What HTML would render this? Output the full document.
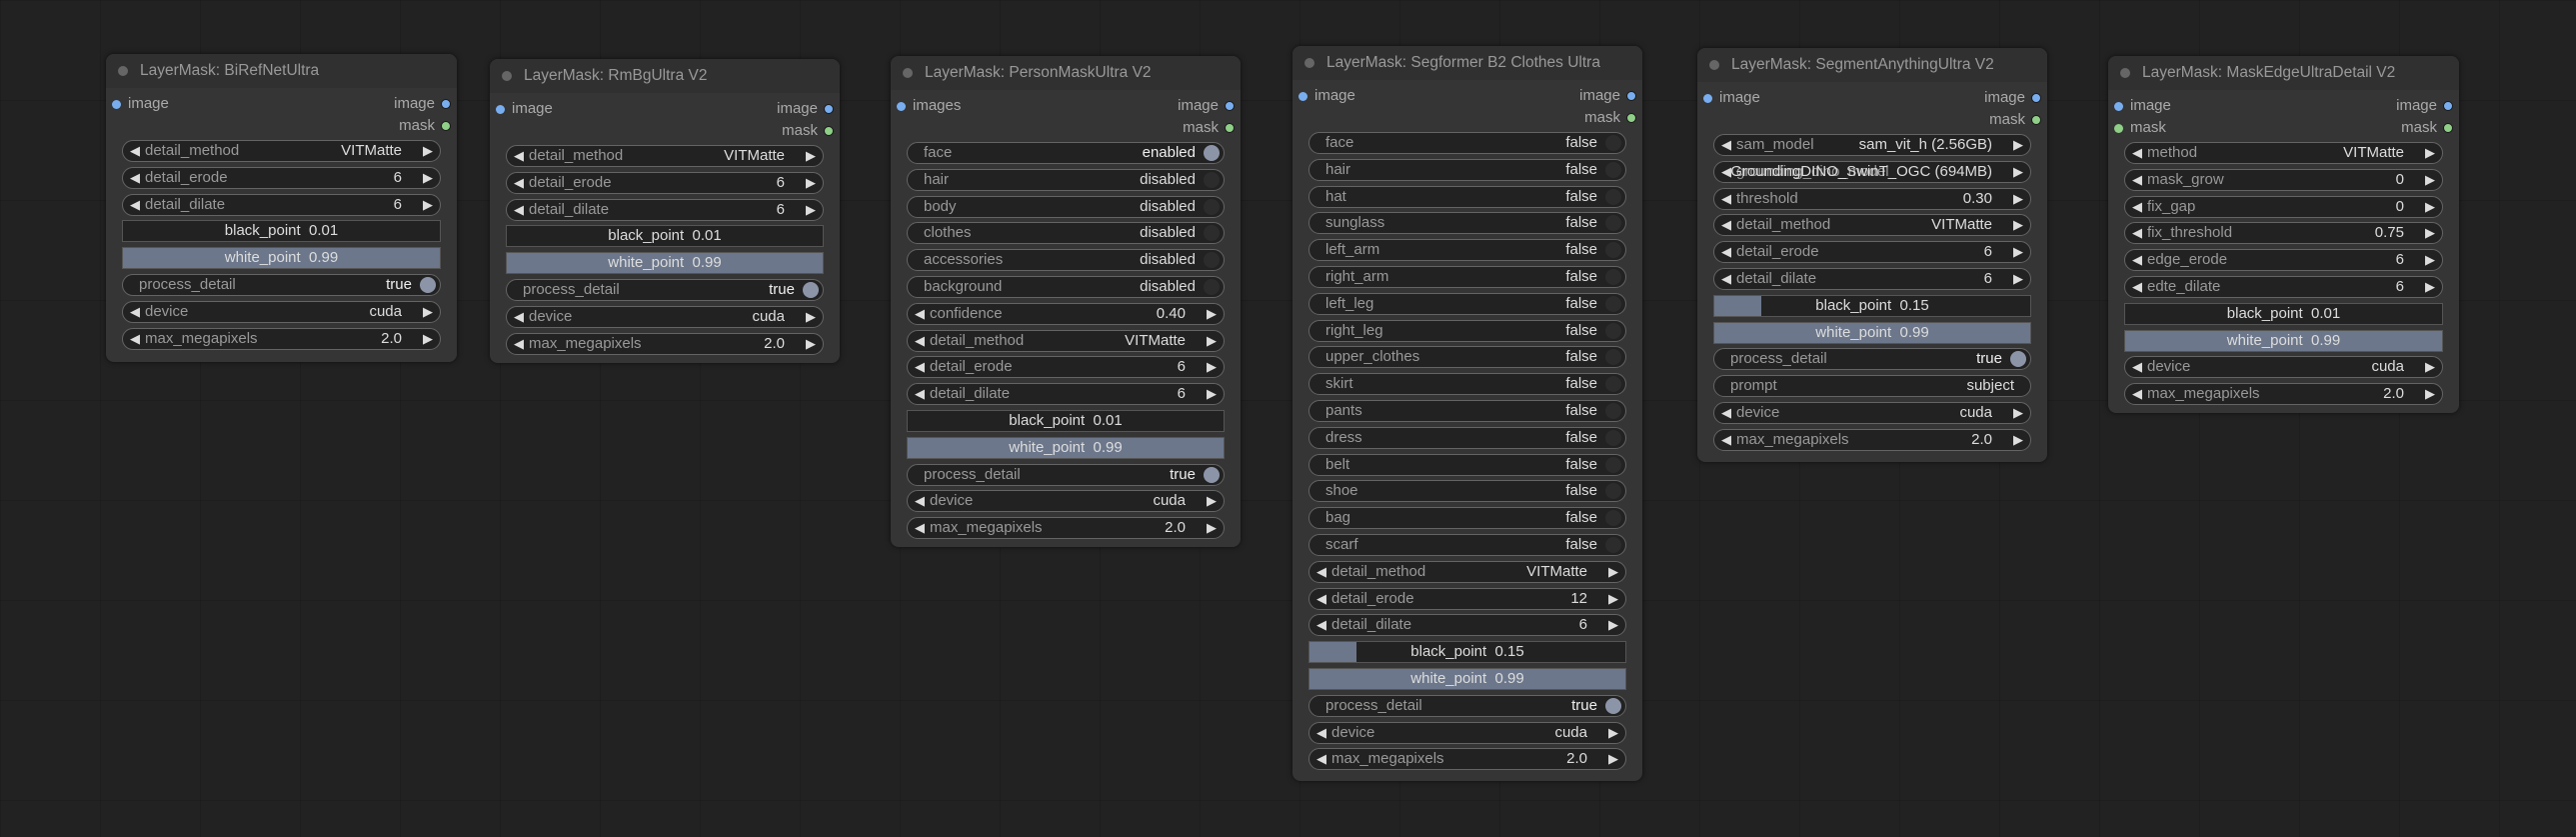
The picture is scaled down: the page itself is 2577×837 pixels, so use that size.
<!DOCTYPE html>
<html><head><meta charset="utf-8"><style>
*{box-sizing:border-box;margin:0;padding:0}
body{width:2577px;height:837px;background:#222;overflow:hidden;position:relative;font-family:"Liberation Sans",Arial,sans-serif;font-size:15px;
background-image:linear-gradient(rgba(0,0,0,.12) 1px,transparent 1px),linear-gradient(90deg,rgba(0,0,0,.12) 1px,transparent 1px);background-size:100px 100px;}
.n{position:absolute;background:#353535;border-radius:8px;box-shadow:0 0 6px rgba(0,0,0,.6)}
.t{height:34px;background:#303030;border-radius:8px 8px 0 0;color:#999;font-size:15.5px;line-height:34px;padding-left:34px;position:relative}
.t:before{content:"";position:absolute;left:12px;top:12px;width:10px;height:10px;border-radius:50%;background:#666}
.slots{position:relative;height:51px;margin-top:1px}
.s{position:absolute;height:22px;line-height:22px;color:#aaa;font-size:15px;margin-top:4px}
.si{left:22px}.so{right:22px}
.d{position:absolute;width:9px;height:9px;border-radius:50%;top:7px}
.si .d{left:-16px}.so .d{right:-16px;border:1.5px solid #1a1a1a;width:10px;height:10px;top:6px}
.b{background:#78aef0}.g{background:#8fcf88}
.ws{padding:0 16px}
.w{position:relative;height:22px;margin-bottom:4.8px;background:#222;border:1px solid #646464;border-radius:11px;line-height:20px;color:#999;white-space:nowrap}
.w .l{position:absolute;left:22px}
.w .v{position:absolute;right:38px;color:#ddd}
.w .al{position:absolute;left:7px;color:#ddd;font-size:13px}
.w .ar{position:absolute;right:7px;color:#ddd;font-size:13px}
.tg .l{left:16px}
.tg .v{right:28px}
.tg:after{content:"";position:absolute;right:4px;top:2px;width:16px;height:16px;border-radius:50%;background:#2c2c2c}
.tg.on:after{background:#8c95a8}
.tg.on .v{color:#eee}
.tx .l{left:16px}.tx .v{right:16px}
.sl{border-radius:0;border-color:#555;text-align:center;color:#ddd;overflow:hidden}
.sl .f{position:absolute;left:0;top:0;bottom:0;background:#6c778b}
.sl span{position:relative}
</style></head><body>

<!-- Node 1 -->
<div class="n" style="left:106px;top:54px;width:351px;height:308px">
<div class="t">LayerMask: BiRefNetUltra</div>
<div class="slots"><div class="s si" style="top:0"><i class="d b"></i>image</div><div class="s so" style="top:0">image<i class="d b"></i></div><div class="s so" style="top:22px">mask<i class="d g"></i></div></div>
<div class="ws">
<div class="w"><span class="al">◀</span><span class="l">detail_method</span><span class="v">VITMatte</span><span class="ar">▶</span></div>
<div class="w"><span class="al">◀</span><span class="l">detail_erode</span><span class="v">6</span><span class="ar">▶</span></div>
<div class="w"><span class="al">◀</span><span class="l">detail_dilate</span><span class="v">6</span><span class="ar">▶</span></div>
<div class="w sl"><span>black_point&nbsp; 0.01</span></div>
<div class="w sl"><i class="f" style="width:100%"></i><span>white_point&nbsp; 0.99</span></div>
<div class="w tg on"><span class="l">process_detail</span><span class="v">true</span></div>
<div class="w"><span class="al">◀</span><span class="l">device</span><span class="v">cuda</span><span class="ar">▶</span></div>
<div class="w"><span class="al">◀</span><span class="l">max_megapixels</span><span class="v">2.0</span><span class="ar">▶</span></div>
</div></div>

<!-- Node 2 -->
<div class="n" style="left:490px;top:59px;width:350px;height:304px">
<div class="t">LayerMask: RmBgUltra V2</div>
<div class="slots"><div class="s si" style="top:0"><i class="d b"></i>image</div><div class="s so" style="top:0">image<i class="d b"></i></div><div class="s so" style="top:22px">mask<i class="d g"></i></div></div>
<div class="ws">
<div class="w"><span class="al">◀</span><span class="l">detail_method</span><span class="v">VITMatte</span><span class="ar">▶</span></div>
<div class="w"><span class="al">◀</span><span class="l">detail_erode</span><span class="v">6</span><span class="ar">▶</span></div>
<div class="w"><span class="al">◀</span><span class="l">detail_dilate</span><span class="v">6</span><span class="ar">▶</span></div>
<div class="w sl"><span>black_point&nbsp; 0.01</span></div>
<div class="w sl"><i class="f" style="width:100%"></i><span>white_point&nbsp; 0.99</span></div>
<div class="w tg on"><span class="l">process_detail</span><span class="v">true</span></div>
<div class="w"><span class="al">◀</span><span class="l">device</span><span class="v">cuda</span><span class="ar">▶</span></div>
<div class="w"><span class="al">◀</span><span class="l">max_megapixels</span><span class="v">2.0</span><span class="ar">▶</span></div>
</div></div>

<!-- Node 3 -->
<div class="n" style="left:891px;top:56px;width:350px;height:491px">
<div class="t">LayerMask: PersonMaskUltra V2</div>
<div class="slots"><div class="s si" style="top:0"><i class="d b"></i>images</div><div class="s so" style="top:0">image<i class="d b"></i></div><div class="s so" style="top:22px">mask<i class="d g"></i></div></div>
<div class="ws">
<div class="w tg on"><span class="l">face</span><span class="v">enabled</span></div>
<div class="w tg"><span class="l">hair</span><span class="v">disabled</span></div>
<div class="w tg"><span class="l">body</span><span class="v">disabled</span></div>
<div class="w tg"><span class="l">clothes</span><span class="v">disabled</span></div>
<div class="w tg"><span class="l">accessories</span><span class="v">disabled</span></div>
<div class="w tg"><span class="l">background</span><span class="v">disabled</span></div>
<div class="w"><span class="al">◀</span><span class="l">confidence</span><span class="v">0.40</span><span class="ar">▶</span></div>
<div class="w"><span class="al">◀</span><span class="l">detail_method</span><span class="v">VITMatte</span><span class="ar">▶</span></div>
<div class="w"><span class="al">◀</span><span class="l">detail_erode</span><span class="v">6</span><span class="ar">▶</span></div>
<div class="w"><span class="al">◀</span><span class="l">detail_dilate</span><span class="v">6</span><span class="ar">▶</span></div>
<div class="w sl"><span>black_point&nbsp; 0.01</span></div>
<div class="w sl"><i class="f" style="width:100%"></i><span>white_point&nbsp; 0.99</span></div>
<div class="w tg on"><span class="l">process_detail</span><span class="v">true</span></div>
<div class="w"><span class="al">◀</span><span class="l">device</span><span class="v">cuda</span><span class="ar">▶</span></div>
<div class="w"><span class="al">◀</span><span class="l">max_megapixels</span><span class="v">2.0</span><span class="ar">▶</span></div>
</div></div>

<!-- Node 4 -->
<div class="n" style="left:1293px;top:46px;width:350px;height:735px">
<div class="t">LayerMask: Segformer B2 Clothes Ultra</div>
<div class="slots"><div class="s si" style="top:0"><i class="d b"></i>image</div><div class="s so" style="top:0">image<i class="d b"></i></div><div class="s so" style="top:22px">mask<i class="d g"></i></div></div>
<div class="ws">
<div class="w tg"><span class="l">face</span><span class="v">false</span></div>
<div class="w tg"><span class="l">hair</span><span class="v">false</span></div>
<div class="w tg"><span class="l">hat</span><span class="v">false</span></div>
<div class="w tg"><span class="l">sunglass</span><span class="v">false</span></div>
<div class="w tg"><span class="l">left_arm</span><span class="v">false</span></div>
<div class="w tg"><span class="l">right_arm</span><span class="v">false</span></div>
<div class="w tg"><span class="l">left_leg</span><span class="v">false</span></div>
<div class="w tg"><span class="l">right_leg</span><span class="v">false</span></div>
<div class="w tg"><span class="l">upper_clothes</span><span class="v">false</span></div>
<div class="w tg"><span class="l">skirt</span><span class="v">false</span></div>
<div class="w tg"><span class="l">pants</span><span class="v">false</span></div>
<div class="w tg"><span class="l">dress</span><span class="v">false</span></div>
<div class="w tg"><span class="l">belt</span><span class="v">false</span></div>
<div class="w tg"><span class="l">shoe</span><span class="v">false</span></div>
<div class="w tg"><span class="l">bag</span><span class="v">false</span></div>
<div class="w tg"><span class="l">scarf</span><span class="v">false</span></div>
<div class="w"><span class="al">◀</span><span class="l">detail_method</span><span class="v">VITMatte</span><span class="ar">▶</span></div>
<div class="w"><span class="al">◀</span><span class="l">detail_erode</span><span class="v">12</span><span class="ar">▶</span></div>
<div class="w"><span class="al">◀</span><span class="l">detail_dilate</span><span class="v">6</span><span class="ar">▶</span></div>
<div class="w sl"><i class="f" style="width:15%"></i><span>black_point&nbsp; 0.15</span></div>
<div class="w sl"><i class="f" style="width:100%"></i><span>white_point&nbsp; 0.99</span></div>
<div class="w tg on"><span class="l">process_detail</span><span class="v">true</span></div>
<div class="w"><span class="al">◀</span><span class="l">device</span><span class="v">cuda</span><span class="ar">▶</span></div>
<div class="w"><span class="al">◀</span><span class="l">max_megapixels</span><span class="v">2.0</span><span class="ar">▶</span></div>
</div></div>

<!-- Node 5 -->
<div class="n" style="left:1698px;top:48px;width:350px;height:414px">
<div class="t">LayerMask: SegmentAnythingUltra V2</div>
<div class="slots"><div class="s si" style="top:0"><i class="d b"></i>image</div><div class="s so" style="top:0">image<i class="d b"></i></div><div class="s so" style="top:22px">mask<i class="d g"></i></div></div>
<div class="ws">
<div class="w"><span class="al">◀</span><span class="l">sam_model</span><span class="v">sam_vit_h (2.56GB)</span><span class="ar">▶</span></div>
<div class="w"><span class="al">◀</span><span class="l">grounding_dino_model</span><span class="v">GroundingDINO_SwinT_OGC (694MB)</span><span class="ar">▶</span></div>
<div class="w"><span class="al">◀</span><span class="l">threshold</span><span class="v">0.30</span><span class="ar">▶</span></div>
<div class="w"><span class="al">◀</span><span class="l">detail_method</span><span class="v">VITMatte</span><span class="ar">▶</span></div>
<div class="w"><span class="al">◀</span><span class="l">detail_erode</span><span class="v">6</span><span class="ar">▶</span></div>
<div class="w"><span class="al">◀</span><span class="l">detail_dilate</span><span class="v">6</span><span class="ar">▶</span></div>
<div class="w sl"><i class="f" style="width:15%"></i><span>black_point&nbsp; 0.15</span></div>
<div class="w sl"><i class="f" style="width:100%"></i><span>white_point&nbsp; 0.99</span></div>
<div class="w tg on"><span class="l">process_detail</span><span class="v">true</span></div>
<div class="w tx"><span class="l">prompt</span><span class="v">subject</span></div>
<div class="w"><span class="al">◀</span><span class="l">device</span><span class="v">cuda</span><span class="ar">▶</span></div>
<div class="w"><span class="al">◀</span><span class="l">max_megapixels</span><span class="v">2.0</span><span class="ar">▶</span></div>
</div></div>

<!-- Node 6 -->
<div class="n" style="left:2109px;top:56px;width:351px;height:357px">
<div class="t">LayerMask: MaskEdgeUltraDetail V2</div>
<div class="slots"><div class="s si" style="top:0"><i class="d b"></i>image</div><div class="s si" style="top:22px"><i class="d g"></i>mask</div><div class="s so" style="top:0">image<i class="d b"></i></div><div class="s so" style="top:22px">mask<i class="d g"></i></div></div>
<div class="ws">
<div class="w"><span class="al">◀</span><span class="l">method</span><span class="v">VITMatte</span><span class="ar">▶</span></div>
<div class="w"><span class="al">◀</span><span class="l">mask_grow</span><span class="v">0</span><span class="ar">▶</span></div>
<div class="w"><span class="al">◀</span><span class="l">fix_gap</span><span class="v">0</span><span class="ar">▶</span></div>
<div class="w"><span class="al">◀</span><span class="l">fix_threshold</span><span class="v">0.75</span><span class="ar">▶</span></div>
<div class="w"><span class="al">◀</span><span class="l">edge_erode</span><span class="v">6</span><span class="ar">▶</span></div>
<div class="w"><span class="al">◀</span><span class="l">edte_dilate</span><span class="v">6</span><span class="ar">▶</span></div>
<div class="w sl"><span>black_point&nbsp; 0.01</span></div>
<div class="w sl"><i class="f" style="width:100%"></i><span>white_point&nbsp; 0.99</span></div>
<div class="w"><span class="al">◀</span><span class="l">device</span><span class="v">cuda</span><span class="ar">▶</span></div>
<div class="w"><span class="al">◀</span><span class="l">max_megapixels</span><span class="v">2.0</span><span class="ar">▶</span></div>
</div></div>

</body></html>
